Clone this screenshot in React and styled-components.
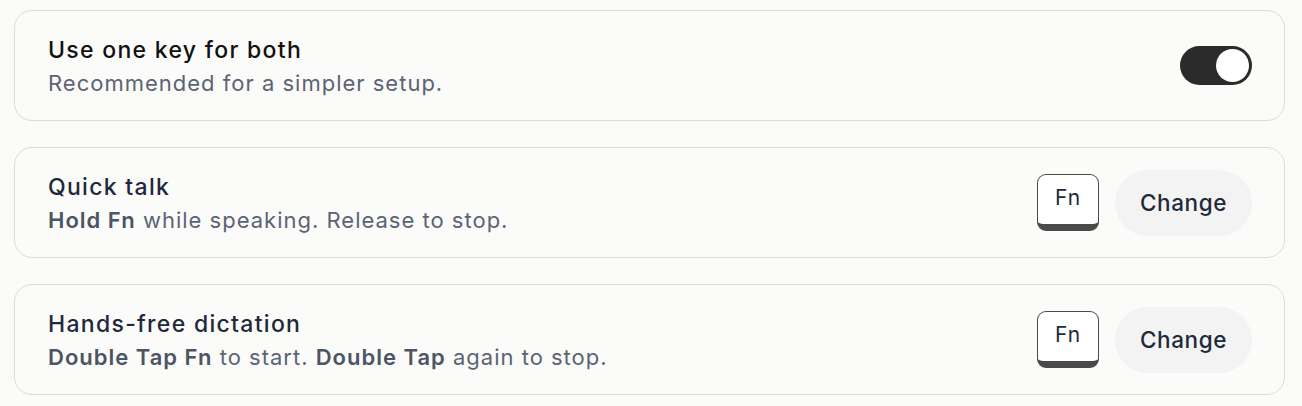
import React from "react";
import styled, { createGlobalStyle } from "styled-components";

const Global = createGlobalStyle`
  html, body { margin: 0; padding: 0; background: #fbfbf9; }
  body { font-family: Inter, "Noto Sans", sans-serif; -webkit-font-smoothing: antialiased; }
`;

const Page = styled.div`
  display: flex;
  flex-direction: column;
  gap: 26px;
  padding: 10px 17px 10px 14px;
`;

const Card = styled.div`
  display: flex;
  align-items: center;
  justify-content: space-between;
  height: 111px;
  box-sizing: border-box;
  padding: 2px 32px 0 33px;
  border: 1.5px solid #dedbd4;
  border-radius: 18px;
  background: #fbfbf9;
`;

const Text = styled.div`
  display: flex;
  flex-direction: column;
  gap: 5px;
`;

const Title = styled.div`
  font-size: 23px;
  line-height: 28px;
  font-weight: 500;
  letter-spacing: 1.3px;
  color: ${(p) => (p.$strong ? "#111111" : "#1e293b")};
`;

const Sub = styled.div`
  font-size: 22px;
  line-height: 28px;
  letter-spacing: 1px;
  color: #5b6474;
  b { font-weight: 600; color: #4b5563; }
`;

const Actions = styled.div`
  display: flex;
  align-items: center;
  gap: 16px;
  margin-top: -2px;
`;

const Toggle = styled.div`
  width: 72px;
  height: 39px;
  margin-top: -2px;
  border-radius: 20px;
  background: #2b2b2b;
  display: flex;
  align-items: center;
  justify-content: flex-end;
  padding: 0 3px;
  box-sizing: border-box;
`;

const Knob = styled.div`
  width: 33px;
  height: 33px;
  border-radius: 50%;
  background: #ffffff;
`;

const Key = styled.div`
  width: 62px;
  height: 57px;
  box-sizing: border-box;
  border: 1.5px solid #4a4a4a;
  border-bottom: 7px solid #4a4a4a;
  border-radius: 9px;
  background: #ffffff;
  display: flex;
  align-items: center;
  justify-content: center;
  font-size: 21px;
  letter-spacing: 0.8px;
  color: #1e293b;
  padding-bottom: 4px;
`;

const ChangeButton = styled.button`
  width: 137px;
  height: 66px;
  border: none;
  border-radius: 33px;
  background: #f3f3f3;
  font-family: Inter, "Noto Sans", sans-serif;
  font-size: 22.5px;
  font-weight: 500;
  letter-spacing: 0.6px;
  color: #1e293b;
  cursor: pointer;
`;

export default function App() {
  return (
    <>
      <Global />
      <Page>
        <Card>
          <Text>
            <Title $strong>Use one key for both</Title>
            <Sub>Recommended for a simpler setup.</Sub>
          </Text>
          <Toggle>
            <Knob />
          </Toggle>
        </Card>
        <Card>
          <Text>
            <Title>Quick talk</Title>
            <Sub>
              <b>Hold Fn</b> while speaking. Release to stop.
            </Sub>
          </Text>
          <Actions>
            <Key>Fn</Key>
            <ChangeButton>Change</ChangeButton>
          </Actions>
        </Card>
        <Card>
          <Text>
            <Title>Hands-free dictation</Title>
            <Sub>
              <b>Double Tap Fn</b> to start. <b>Double Tap</b> again to stop.
            </Sub>
          </Text>
          <Actions>
            <Key>Fn</Key>
            <ChangeButton>Change</ChangeButton>
          </Actions>
        </Card>
      </Page>
    </>
  );
}
